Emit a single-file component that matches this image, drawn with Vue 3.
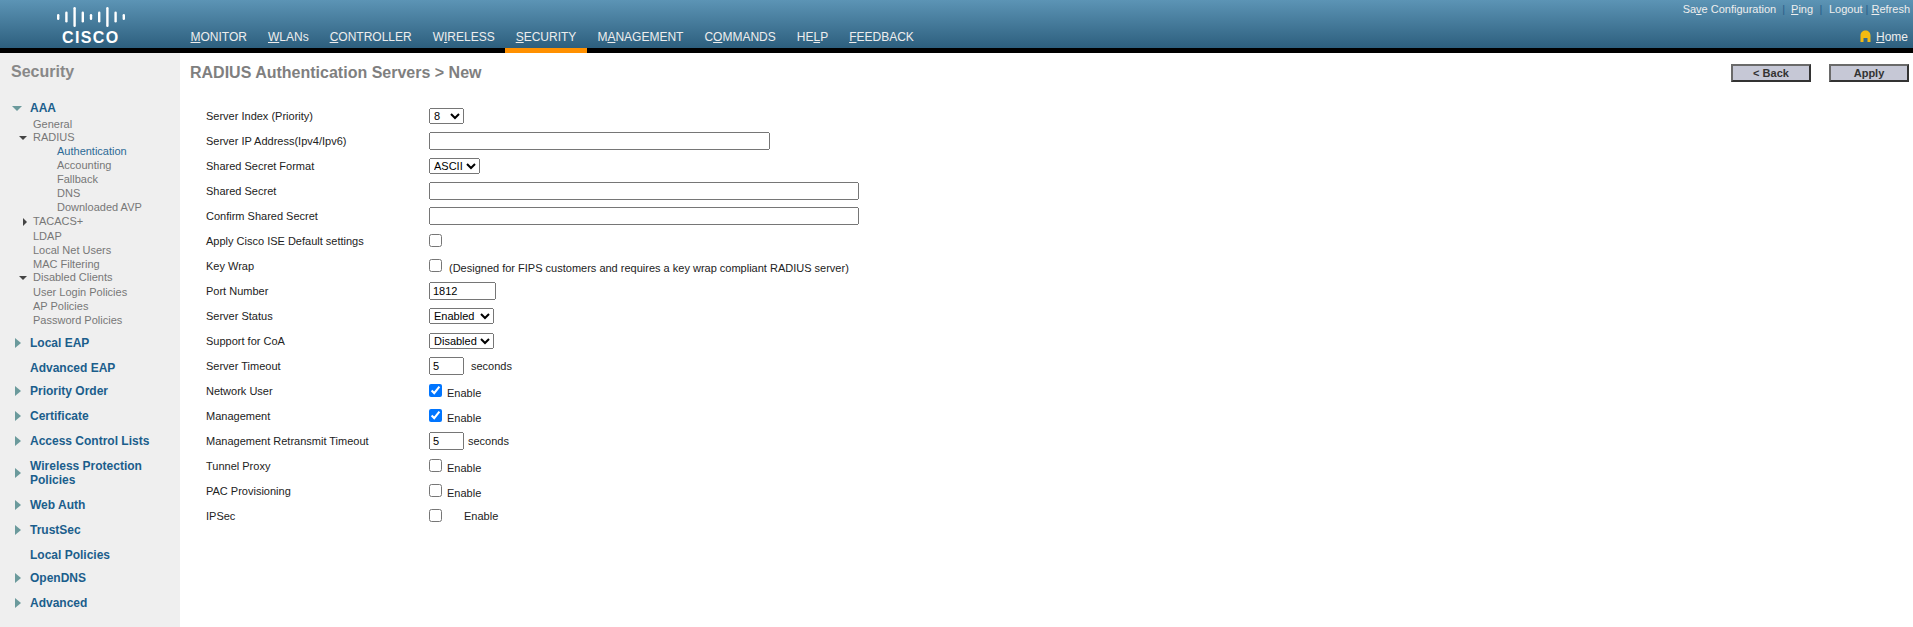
<template>
  <div class="page">
    <header class="top">
      <div class="logo">
        <svg class="bars" width="70" height="22" viewBox="0 0 70 22">
          <rect
            v-for="(bar, index) in logoBars"
            :key="index"
            :x="bar.x"
            :y="11 - bar.h / 2"
            width="2.4"
            :height="bar.h"
            rx="1.2"
          />
        </svg>
        <span class="wordmark">CISCO</span>
      </div>
      <div class="top-right">
        <div class="util">
          <a class="save">Sa<u>v</u>e Configuration</a>
          <i class="pipe first">|</i>
          <a><u>P</u>ing</a>
          <i class="pipe">|</i>
          <a>Logout</a>
          <i class="pipe tight">|</i>
          <a><u>R</u>efresh</a>
        </div>
        <nav class="nav">
          <a
            v-for="tab in tabs"
            :key="tab.name"
            class="tab"
            :class="{ active: tab.name === 'SECURITY' }"
          >{{ tab.name.slice(0, tab.u) }}<u>{{ tab.name[tab.u] }}</u>{{ tab.name.slice(tab.u + 1) }}</a>
          <a class="home">
            <svg width="11" height="12" viewBox="0 0 11 12">
              <path d="M0.5 12V5.5C0.5 2.5 2.8 0.5 5.5 0.5S10.5 2.5 10.5 5.5V12H7.5V8H3.5V12Z" fill="#f3bb12" />
            </svg>
            <span><u>H</u>ome</span>
          </a>
        </nav>
      </div>
    </header>

    <div class="body">
      <aside class="side">
        <h2 class="side-title">Security</h2>
        <template v-for="group in menu" :key="group.name">
          <div class="group" :class="{ plain: !group.arrow, wrapped: group.wrapped }">
            <span class="arrow" :class="group.arrow"></span>
            <span class="group-name">{{ group.name }}</span>
          </div>
          <ul v-if="group.items" class="items">
            <li
              v-for="item in group.items"
              :key="item.name"
              :class="[item.cls, { current: item.name === 'Authentication', deep: item.deep }]"
            >
              <span v-if="item.arrow" class="mini" :class="item.arrow"></span>
              {{ item.name }}
            </li>
          </ul>
        </template>
      </aside>

      <main class="main">
        <div class="bar">
          <h1 class="title">RADIUS Authentication Servers &gt; New</h1>
          <div class="actions">
            <button class="btn" type="button">&lt; Back</button>
            <button class="btn" type="button">Apply</button>
          </div>
        </div>

        <form class="form">
          <label class="row">
            <span class="label">Server Index (Priority)</span>
            <select class="sel-index"><option>8</option></select>
          </label>
          <label class="row">
            <span class="label">Server IP Address(Ipv4/Ipv6)</span>
            <input class="in-ip" type="text" />
          </label>
          <label class="row">
            <span class="label">Shared Secret Format</span>
            <select class="sel-format"><option>ASCII</option></select>
          </label>
          <label class="row">
            <span class="label">Shared Secret</span>
            <input class="in-secret" type="text" />
          </label>
          <label class="row">
            <span class="label">Confirm Shared Secret</span>
            <input class="in-secret" type="text" />
          </label>
          <label class="row">
            <span class="label">Apply Cisco ISE Default settings</span>
            <input type="checkbox" />
          </label>
          <label class="row">
            <span class="label">Key Wrap</span>
            <input type="checkbox" />
            <span class="low note">(Designed for FIPS customers and requires a key wrap compliant RADIUS server)</span>
          </label>
          <label class="row">
            <span class="label">Port Number</span>
            <input class="in-port" type="text" value="1812" />
          </label>
          <label class="row">
            <span class="label">Server Status</span>
            <select class="sel-wide"><option>Enabled</option></select>
          </label>
          <label class="row">
            <span class="label">Support for CoA</span>
            <select class="sel-wide"><option>Disabled</option></select>
          </label>
          <label class="row">
            <span class="label">Server Timeout</span>
            <input class="in-short" type="text" value="5" />
            <span class="unit">seconds</span>
          </label>
          <label class="row">
            <span class="label">Network User</span>
            <input type="checkbox" checked />
            <span class="low enable">Enable</span>
          </label>
          <label class="row">
            <span class="label">Management</span>
            <input type="checkbox" checked />
            <span class="low enable">Enable</span>
          </label>
          <label class="row">
            <span class="label">Management Retransmit Timeout</span>
            <input class="in-short" type="text" value="5" />
            <span class="unit near">seconds</span>
          </label>
          <label class="row">
            <span class="label">Tunnel Proxy</span>
            <input type="checkbox" />
            <span class="low enable">Enable</span>
          </label>
          <label class="row">
            <span class="label">PAC Provisioning</span>
            <input type="checkbox" />
            <span class="low enable">Enable</span>
          </label>
          <label class="row">
            <span class="label">IPSec</span>
            <input type="checkbox" />
            <span class="enable far">Enable</span>
          </label>
        </form>
      </main>
    </div>
  </div>
</template>

<script setup>
const logoBars = [
  { x: 1, h: 6 },
  { x: 9.2, h: 11 },
  { x: 17.4, h: 20 },
  { x: 25.6, h: 11 },
  { x: 33.8, h: 6 },
  { x: 42, h: 11 },
  { x: 50.2, h: 20 },
  { x: 58.4, h: 11 },
  { x: 66.6, h: 6 }
];

// u = index of the access-key letter
const tabs = [
  { name: 'MONITOR', u: 0 },
  { name: 'WLANs', u: 0 },
  { name: 'CONTROLLER', u: 0 },
  { name: 'WIRELESS', u: 1 },
  { name: 'SECURITY', u: 0 },
  { name: 'MANAGEMENT', u: 1 },
  { name: 'COMMANDS', u: 1 },
  { name: 'HELP', u: 2 },
  { name: 'FEEDBACK', u: 0 }
];

const menu = [
  {
    name: 'AAA',
    arrow: 'down',
    items: [
      { name: 'General' },
      { name: 'RADIUS', arrow: 'down', cls: 'up' },
      { name: 'Authentication', deep: true },
      { name: 'Accounting', deep: true },
      { name: 'Fallback', deep: true },
      { name: 'DNS', deep: true },
      { name: 'Downloaded AVP', deep: true },
      { name: 'TACACS+', arrow: 'right', cls: 'up' },
      { name: 'LDAP' },
      { name: 'Local Net Users' },
      { name: 'MAC Filtering' },
      { name: 'Disabled Clients', arrow: 'down', cls: 'up' },
      { name: 'User Login Policies' },
      { name: 'AP Policies' },
      { name: 'Password Policies' }
    ]
  },
  { name: 'Local EAP', arrow: 'right' },
  { name: 'Advanced EAP' },
  { name: 'Priority Order', arrow: 'right' },
  { name: 'Certificate', arrow: 'right' },
  { name: 'Access Control Lists', arrow: 'right' },
  { name: 'Wireless Protection Policies', arrow: 'right', wrapped: true },
  { name: 'Web Auth', arrow: 'right' },
  { name: 'TrustSec', arrow: 'right' },
  { name: 'Local Policies' },
  { name: 'OpenDNS', arrow: 'right' },
  { name: 'Advanced', arrow: 'right' }
];
</script>

<style scoped>
.page {
  display: flex;
  flex-direction: column;
  min-height: 627px;
  font-family: "Liberation Sans", Arial, sans-serif;
  font-size: 11px;
  color: #222;
}

.top {
  display: flex;
  height: 48px;
  flex: none;
  border-bottom: 5px solid #000;
  background: linear-gradient(to bottom, #5c94b5, #2d5f7e);
  color: #eee;
}

.logo {
  position: relative;
  width: 180px;
  flex: none;
}

.bars {
  position: absolute;
  left: 56px;
  top: 6px;
  fill: #fff;
}

.wordmark {
  position: absolute;
  left: 62px;
  top: 29px;
  font-size: 16px;
  line-height: 18px;
  font-weight: 700;
  letter-spacing: 1.4px;
  color: #fff;
}

.top-right {
  flex: 1;
  display: flex;
  flex-direction: column;
  min-width: 0;
}

.util {
  display: flex;
  justify-content: flex-end;
  align-items: center;
  height: 18px;
  padding-right: 3px;
}

.pipe {
  font-style: normal;
  color: #2a5f8a;
  margin: 0 6.5px;
}

.pipe.first {
  margin: 0 6px;
}

.pipe.tight {
  margin: 0 3px;
}

.nav {
  flex: 1;
  display: flex;
  font-size: 12px;
}

.tab {
  padding: 12px 10.5px 0;
  line-height: 14px;
  margin-bottom: -5px;
  border-bottom: 5px solid transparent;
}

.tab.active {
  border-bottom-color: #ff9000;
}

.home {
  margin-left: auto;
  padding-right: 5px;
  display: flex;
  align-items: flex-start;
  gap: 5px;
  line-height: 14px;
  padding-top: 12px;
}

.body {
  flex: 1;
  display: flex;
}

.side {
  width: 180px;
  flex: none;
  background: #efefef;
}

.side-title {
  margin: 1px 0 5px 11px;
  height: 36px;
  line-height: 36px;
  font-size: 16px;
  font-weight: 700;
  color: #888;
}

.group {
  display: flex;
  align-items: center;
  height: 25px;
  padding-left: 15px;
  font-size: 12px;
  line-height: 14px;
  font-weight: 700;
  color: #1b5e8c;
}

.group.plain {
  height: 21px;
  padding-top: 2px;
}

.group.wrapped {
  height: 39px;
  padding-right: 10px;
}

.group-name {
  margin-left: 15px;
}

.arrow {
  width: 0;
  height: 0;
  flex: none;
}

.arrow.right {
  border-left: 6px solid #6b9a9c;
  border-top: 5px solid transparent;
  border-bottom: 5px solid transparent;
  margin-right: -6px;
}

.arrow.down {
  border-top: 5px solid #6b9a9c;
  border-left: 5px solid transparent;
  border-right: 5px solid transparent;
  margin-left: -3px;
  margin-right: -7px;
  margin-top: 2px;
}

.items {
  list-style: none;
  margin: -3px 0 3px;
  padding: 0 0 0 33px;
  color: #777;
}

.items li {
  position: relative;
  height: 14px;
  line-height: 14px;
}

.items li.deep {
  padding-left: 24px;
  line-height: 13px;
}

.items li.current {
  color: #2c6a96;
}

.items li.up {
  line-height: 12px;
}

.mini {
  position: absolute;
  width: 0;
  height: 0;
}

.mini.down {
  left: -14px;
  top: 5px;
  border-top: 4px solid #444;
  border-left: 4px solid transparent;
  border-right: 4px solid transparent;
}

.mini.right {
  left: -10px;
  top: 3px;
  border-left: 4px solid #444;
  border-top: 4px solid transparent;
  border-bottom: 4px solid transparent;
}

.main {
  flex: 1;
  min-width: 0;
  padding: 0 4px 0 10px;
}

.bar {
  display: flex;
  justify-content: space-between;
  align-items: center;
  padding-top: 11px;
}

.title {
  margin: 0;
  font-size: 16px;
  line-height: 18px;
  font-weight: 700;
  color: #7f7f7f;
}

.actions {
  display: flex;
  gap: 18px;
}

.btn {
  width: 80px;
  height: 18px;
  padding: 0;
  border: 2px solid;
  border-color: #6a6a6a #333 #333 #6a6a6a;
  background: #c6c8d6;
  font: 700 11px "Liberation Sans", Arial, sans-serif;
  color: #333;
}

.form {
  margin-top: 21px;
  padding-left: 16px;
}

.row {
  display: flex;
  align-items: center;
  height: 25px;
}

.label {
  width: 223px;
  flex: none;
}

.row input[type='checkbox'] {
  margin: 0;
  flex: none;
}

.row select,
.row input[type='text'] {
  margin: 0;
  font: 11px "Liberation Sans", Arial, sans-serif;
  box-sizing: border-box;
}

.row input[type='text'] {
  height: 18px;
  padding: 1px 2px;
}

.row select {
  height: 16px;
}

.sel-index { width: 35px; }
.sel-format { width: 51px; }
.sel-wide { width: 65px; }
.in-ip { width: 341px; }
.in-secret { width: 430px; }
.in-port { width: 67px; }
.in-short { width: 35px; }

.low {
  margin-top: 4px;
}

.note {
  margin-left: 7px;
}

.enable {
  margin-left: 5px;
}

.enable.far {
  margin-left: 22px;
}

.unit {
  margin-left: 7px;
}

.unit.near {
  margin-left: 4px;
}
</style>

<style>
html,
body {
  margin: 0;
  background: #fff;
}
</style>
